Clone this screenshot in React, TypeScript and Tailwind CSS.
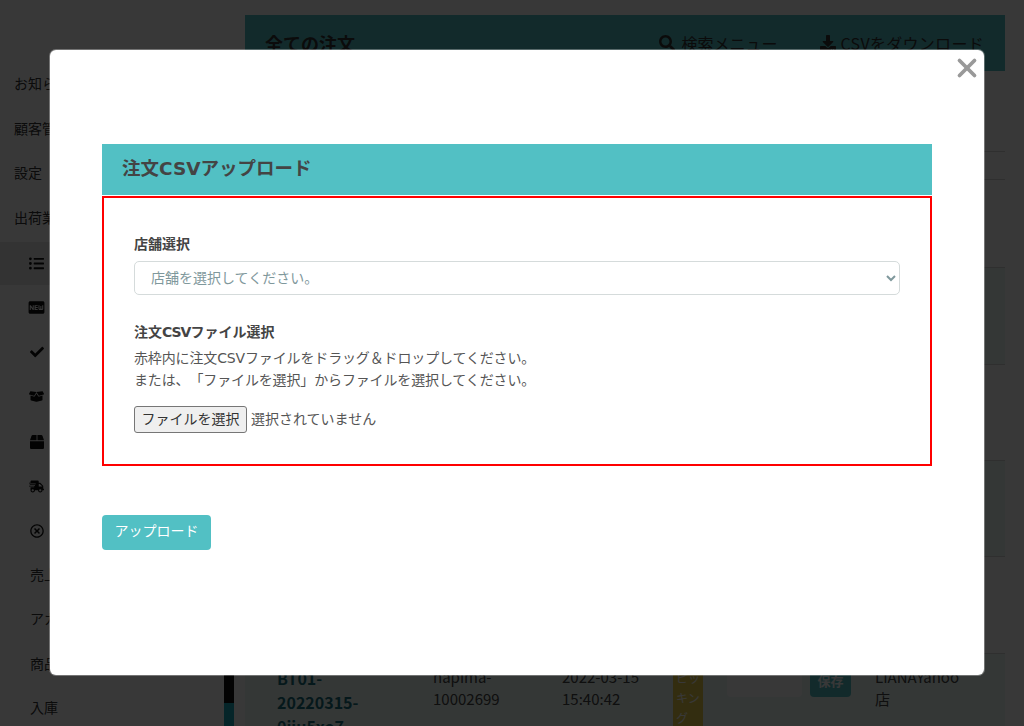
import { X } from 'lucide-react'
import { FaBox, FaBoxOpen, FaCheck, FaDownload, FaListUl, FaRegTimesCircle, FaSearch, FaShippingFast } from 'react-icons/fa'
import { MdFiberNew } from 'react-icons/md'

const SUB_ICONS = [
  { Icon: MdFiberNew, size: 19 },
  { Icon: FaCheck, size: 14 },
  { Icon: FaBoxOpen, size: 15 },
  { Icon: FaBox, size: 14 },
  { Icon: FaShippingFast, size: 15 },
  { Icon: FaRegTimesCircle, size: 14 },
]
const TOP_MENU = ['お知らせ', '顧客管理', '設定', '出荷業務']
const BOTTOM_MENU = ['売上', 'アカウント', '商品', '入庫']
const ROW_HEIGHTS = [81, 28, 88, 97, 96, 96, 97]

function Sidebar() {
  return (
    <aside className="w-[224px] shrink-0 pt-[61px] text-[14px] text-[#333]">
      {TOP_MENU.map((label) => (
        <div key={label} className="h-[44.5px] pl-[14px] leading-[44.5px]">
          {label}
        </div>
      ))}
      <div className="mt-[3px] flex h-[43px] items-center bg-[#e6e6e6] pl-[29px] text-[#111]">
        <FaListUl size={15} />
      </div>
      {SUB_ICONS.map(({ Icon, size }, i) => (
        <div key={i} className="flex h-[44.8px] w-[59px] items-center justify-center pl-[14px] text-[#111]">
          <Icon size={size} />
        </div>
      ))}
      <div className="mt-[-2px]">
        {BOTTOM_MENU.map((label) => (
          <div key={label} className="h-[44.5px] pl-[30px] leading-[44.5px]">
            {label}
          </div>
        ))}
      </div>
    </aside>
  )
}

function OrderRow() {
  return (
    <div className="flex h-[72px] overflow-hidden pl-[32px] pt-[12px] text-[15px] leading-[22px] text-[#444]">
      <div className="h-[72px] w-[156px] text-[16px] font-bold leading-[24px] text-[#1a6f7d]">
        BT01-
        <br />
        20220315-
        <br />
        0jju5xo7
      </div>
      <div className="w-[129px]">
        napima-
        <br />
        10002699
      </div>
      <div className="w-[111px]">
        2022-03-15
        <br />
        15:40:42
      </div>
      <div className="mt-[-12px] h-[84px] w-[30px] shrink-0 bg-[#e8ce4a] px-[3px] pt-[14px] text-[12px] leading-[20px] text-white">
        ピッキング
      </div>
      <div className="ml-[24px] mt-[-1px] h-[32px] w-[75px] rounded-[4px] bg-white" />
      <div className="ml-[8px] mt-[-1px] flex h-[32px] w-[41px] items-center justify-center rounded-[4px] bg-[#52c0c4] text-[13px] font-bold text-white">
        保存
      </div>
      <div className="ml-[24px] w-[90px]">LIANAYahoo店</div>
    </div>
  )
}

function OrdersCard() {
  return (
    <main className="mt-[15px] h-[711px] w-[760px] shrink-0 bg-white">
      <header className="flex h-[56px] items-center bg-[#55bec2] pl-[20px] pr-[21px] text-[#333]">
        <h1 className="text-[18px] font-bold">全ての注文</h1>
        <div className="ml-auto flex items-center gap-[6px] text-[16px]">
          <FaSearch size={16} />
          検索メニュー
        </div>
        <div className="ml-[43px] flex items-center gap-[4px] text-[16px]">
          <FaDownload size={16} />
          <span className="tracking-[0.3px]">CSVをダウンロード</span>
        </div>
      </header>
      {ROW_HEIGHTS.map((height, i) => (
        <div
          key={i}
          style={{ height }}
          className={`border-b border-[#d4d4d4] ${i === 3 || i === 5 ? 'bg-[#ecfaf5]' : ''}`}
        />
      ))}
      <div className="bg-[#ecfaf5]">
        <OrderRow />
      </div>
    </main>
  )
}

function UploadModal() {
  return (
    <div className='absolute left-[50px] top-[50px] h-[625px] w-[934px] rounded-[6px] bg-white px-[52px] pt-[94px] text-[14px] text-[#555] shadow-[0_0_0_1px_rgba(255,255,255,0.3)] [font-family:"DejaVu_Sans","Noto_Sans_CJK_JP",sans-serif] [text-spacing-trim:space-all]'>
      <button className="absolute right-[2px] top-[3px] text-[#999]">
        <X size={30} strokeWidth={3} />
      </button>
      <h2 className="flex h-[51px] items-center bg-[#52c0c4] pb-[2px] pl-[20px] text-[18.5px] font-bold text-[#444]">
        注文CSVアップロード
      </h2>
      <div className="mt-[1px] h-[270px] border-2 border-[#ff0000] px-[30px] pt-[34px]">
        <label className="block font-bold leading-[24px] text-[#444]">店舗選択</label>
        <select className="mt-[5px] block h-[34px] w-full rounded-[5px] border border-[#d5dbdb] bg-white pl-[12px] text-[14px] text-[#7f989c]">
          <option>店舗を選択してください。</option>
        </select>
        <div className="mt-[25px] font-bold leading-[24px] text-[#444]">
          注文<span className="tracking-[-1px]">CSV</span>ファイル選択
        </div>
        <p className="mt-[3px] leading-[22px] tracking-[-0.14px]">
          赤枠内に注文CSVファイルをドラッグ＆ドロップしてください。
          <br />
          または、「ファイルを選択」からファイルを選択してください。
        </p>
        <div className="mt-[15px] flex items-center gap-[4px]">
          <button className="h-[27px] w-[113px] rounded-[3px] border border-[#767676] bg-[#efefef] text-[#333]">
            ファイルを選択
          </button>
          <span>選択されていません</span>
        </div>
      </div>
      <button className="mt-[49px] h-[35px] w-[109px] rounded-[4px] bg-[#52c0c4] pb-[2px] text-white">アップロード</button>
    </div>
  )
}

export default function App() {
  return (
    <div className='relative flex h-[726px] overflow-hidden bg-white [font-family:"Noto_Sans_CJK_JP","Liberation_Sans",sans-serif]'>
      <Sidebar />
      {/* Sidebar scrollbar */}
      <div className="mt-[60px] flex w-[10px] shrink-0 flex-col bg-[#1aaabb]">
        <div className="h-[643px] bg-[#111]" />
      </div>
      <div className="w-[11px] shrink-0" />
      <OrdersCard />

      {/* Backdrop */}
      <div className="absolute inset-0 bg-black/[0.78]" />
      <UploadModal />
    </div>
  )
}
